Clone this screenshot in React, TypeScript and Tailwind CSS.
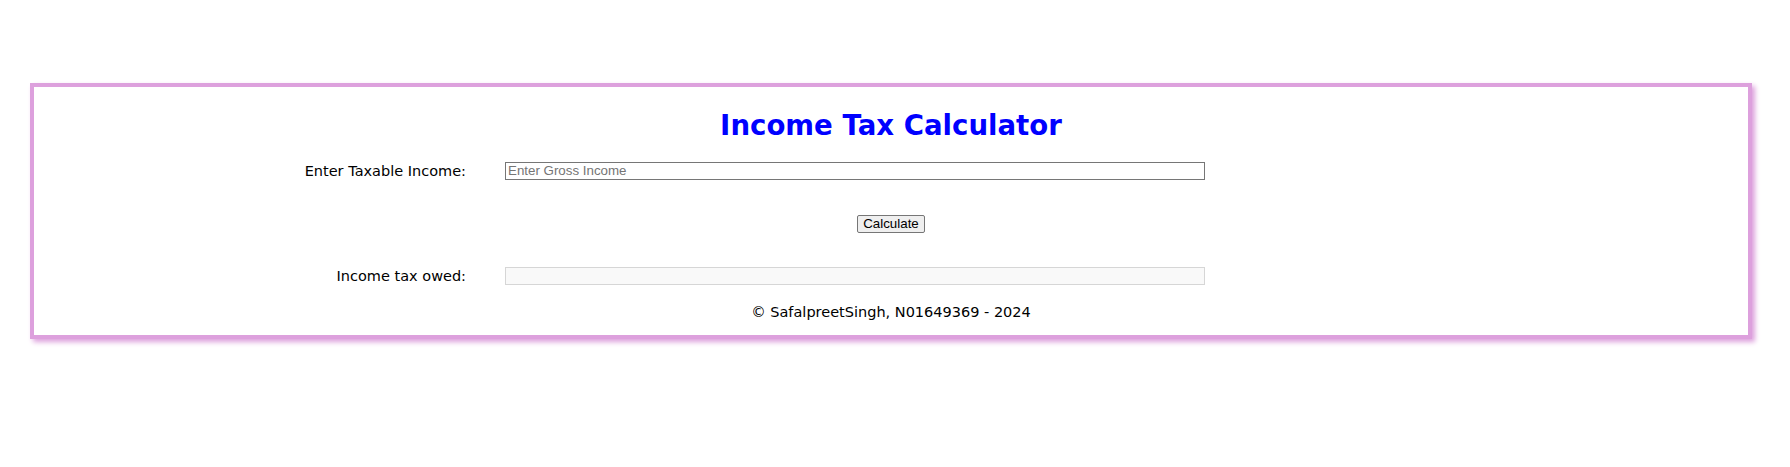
import React from 'react';

export default function App() {
  const font = { fontFamily: '"DejaVu Sans", Verdana, sans-serif' };
  return (
    <div className="w-[1790px] h-[467px] bg-white pt-[83px]" style={font}>
      <div className="ml-[30px] w-[1722px] border-4 border-[#dda0dd] shadow-[3px_3px_5px_#dda0dd] pt-[23px] pb-[14px] font-['DejaVu_Sans',sans-serif]">
        <h1 className="text-center text-[27.6px] leading-[32px] font-bold text-[#0000ff]">Income Tax Calculator</h1>

        <div className="mt-[20px] flex items-center h-[18px]">
          <label className="w-[432px] text-right text-[14.5px] leading-[18px] text-black">Enter Taxable Income:</label>
          <input
            type="text"
            placeholder="Enter Gross Income"
            className="ml-[39px] w-[700px] h-[18px] border border-[#767676] px-[2px] text-[13.33px] font-['Liberation_Sans',Arial,sans-serif] placeholder:text-[#757575] outline-none"
          />
        </div>

        <div className="mt-[35px] flex justify-center">
          <button className="h-[18px] px-[5px] border border-[#767676] rounded-[2px] bg-[#efefef] text-[13.33px] leading-[16px] text-black font-['Liberation_Sans',Arial,sans-serif]">
            Calculate
          </button>
        </div>

        <div className="mt-[34px] flex items-center h-[18px]">
          <label className="w-[432px] text-right text-[14.5px] leading-[18px] text-black">Income tax owed:</label>
          <input
            type="text"
            disabled
            className="ml-[39px] w-[700px] h-[18px] border border-[#d6d6d6] bg-[#f9f9f9] px-[2px] text-[13.33px] font-['Liberation_Sans',Arial,sans-serif]"
          />
        </div>

        <p className="mt-[18px] text-center text-[14.5px] leading-[18px] text-black">© SafalpreetSingh, N01649369 - 2024</p>
      </div>
    </div>
  );
}
